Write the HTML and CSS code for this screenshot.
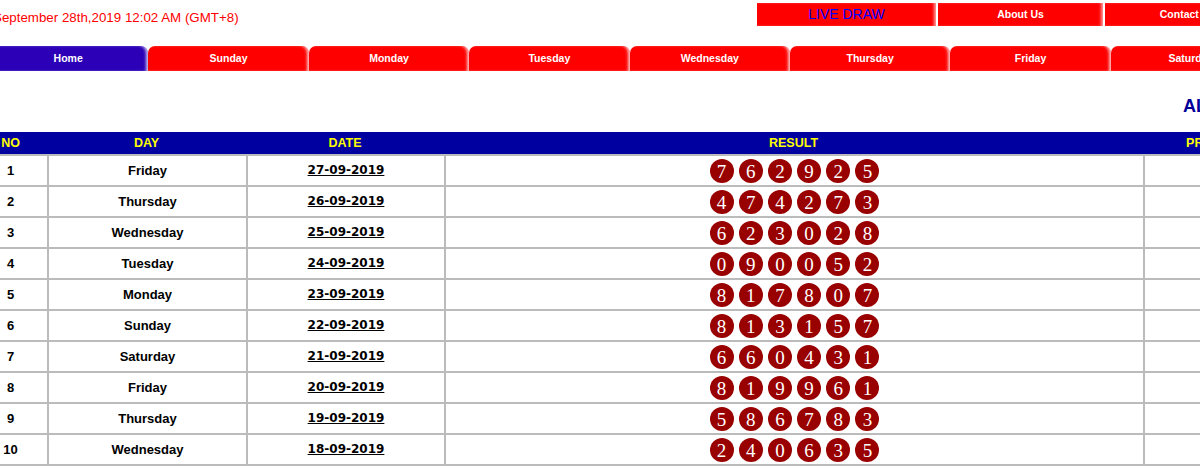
FILE: index.html
```html
<!DOCTYPE html>
<html lang="en">
<head>
<meta charset="utf-8">
<title>Results</title>
<link rel="stylesheet" href="styles.css">
</head>
<body>
<div class="page">
  <header class="topbar">
    <div class="clock">September 28th,2019 12:02 AM (GMT+8)</div>
    <nav class="topnav">
      <a class="topnav__item topnav__item--live" href="#">LIVE DRAW</a>
      <a class="topnav__item topnav__item--small" href="#">About Us</a>
      <a class="topnav__item topnav__item--small" href="#">Contact Us</a>
    </nav>
  </header>

  <nav class="tabs">
    <a class="tab tab--active" href="#">Home</a>
    <a class="tab" href="#">Sunday</a>
    <a class="tab" href="#">Monday</a>
    <a class="tab" href="#">Tuesday</a>
    <a class="tab" href="#">Wednesday</a>
    <a class="tab" href="#">Thursday</a>
    <a class="tab" href="#">Friday</a>
    <a class="tab" href="#">Saturday</a>
  </nav>

  <h1 class="title">ALL RESULT</h1>

  <table class="results">
    <colgroup>
      <col class="col-no">
      <col class="col-day">
      <col class="col-date">
      <col class="col-result">
      <col class="col-prize">
    </colgroup>
    <thead>
      <tr><th>NO</th><th>DAY</th><th>DATE</th><th>RESULT</th><th>PRIZE</th></tr>
    </thead>
    <tbody>
      <tr><td class="no">1</td><td class="day">Friday</td><td class="date"><a href="#">27-09-2019</a></td><td><div class="balls"><span class="ball">7</span><span class="ball">6</span><span class="ball">2</span><span class="ball">9</span><span class="ball">2</span><span class="ball">5</span></div></td><td></td></tr>
      <tr><td class="no">2</td><td class="day">Thursday</td><td class="date"><a href="#">26-09-2019</a></td><td><div class="balls"><span class="ball">4</span><span class="ball">7</span><span class="ball">4</span><span class="ball">2</span><span class="ball">7</span><span class="ball">3</span></div></td><td></td></tr>
      <tr><td class="no">3</td><td class="day">Wednesday</td><td class="date"><a href="#">25-09-2019</a></td><td><div class="balls"><span class="ball">6</span><span class="ball">2</span><span class="ball">3</span><span class="ball">0</span><span class="ball">2</span><span class="ball">8</span></div></td><td></td></tr>
      <tr><td class="no">4</td><td class="day">Tuesday</td><td class="date"><a href="#">24-09-2019</a></td><td><div class="balls"><span class="ball">0</span><span class="ball">9</span><span class="ball">0</span><span class="ball">0</span><span class="ball">5</span><span class="ball">2</span></div></td><td></td></tr>
      <tr><td class="no">5</td><td class="day">Monday</td><td class="date"><a href="#">23-09-2019</a></td><td><div class="balls"><span class="ball">8</span><span class="ball">1</span><span class="ball">7</span><span class="ball">8</span><span class="ball">0</span><span class="ball">7</span></div></td><td></td></tr>
      <tr><td class="no">6</td><td class="day">Sunday</td><td class="date"><a href="#">22-09-2019</a></td><td><div class="balls"><span class="ball">8</span><span class="ball">1</span><span class="ball">3</span><span class="ball">1</span><span class="ball">5</span><span class="ball">7</span></div></td><td></td></tr>
      <tr><td class="no">7</td><td class="day">Saturday</td><td class="date"><a href="#">21-09-2019</a></td><td><div class="balls"><span class="ball">6</span><span class="ball">6</span><span class="ball">0</span><span class="ball">4</span><span class="ball">3</span><span class="ball">1</span></div></td><td></td></tr>
      <tr><td class="no">8</td><td class="day">Friday</td><td class="date"><a href="#">20-09-2019</a></td><td><div class="balls"><span class="ball">8</span><span class="ball">1</span><span class="ball">9</span><span class="ball">9</span><span class="ball">6</span><span class="ball">1</span></div></td><td></td></tr>
      <tr><td class="no">9</td><td class="day">Thursday</td><td class="date"><a href="#">19-09-2019</a></td><td><div class="balls"><span class="ball">5</span><span class="ball">8</span><span class="ball">6</span><span class="ball">7</span><span class="ball">8</span><span class="ball">3</span></div></td><td></td></tr>
      <tr><td class="no">10</td><td class="day">Wednesday</td><td class="date"><a href="#">18-09-2019</a></td><td><div class="balls"><span class="ball">2</span><span class="ball">4</span><span class="ball">0</span><span class="ball">6</span><span class="ball">3</span><span class="ball">5</span></div></td><td></td></tr>
    </tbody>
  </table>
</div>
</body>
</html>
```

FILE: styles.css
```css
html, body {
  margin: 0;
  padding: 0;
  overflow: hidden;
  background: #ffffff;
}

body {
  width: 1200px;
  height: 469px;
  font-family: "Liberation Sans", Arial, sans-serif;
}

.page {
  width: 1282px;
  margin-left: -12px;
}

/* top bar */
.topbar {
  display: flex;
  align-items: flex-start;
  justify-content: space-between;
  height: 46px;
}

.clock {
  margin-top: 10px;
  padding-left: 5px;
  font-size: 13.33px;
  line-height: 16px;
  color: #ff0000;
  white-space: nowrap;
}

.topnav {
  display: flex;
  gap: 2px;
  margin-top: 3px;
}

.topnav__item {
  display: block;
  height: 23px;
  line-height: 23px;
  text-align: center;
  background: #ff0000;
  color: #ffffff;
  font-weight: bold;
  font-size: 10.5px;
  text-decoration: none;
  white-space: nowrap;
  box-shadow: inset -3px 0 3px -1px rgba(255, 255, 255, 0.6);
}

.topnav__item--live {
  width: 179px;
  color: #0000ff;
  font-weight: normal;
  font-size: 14px;
}

.topnav__item--small {
  width: 165px;
}

/* tabs */
.tabs {
  display: flex;
  height: 25px;
}

.tab {
  flex: 0 0 160.4px;
  height: 25px;
  line-height: 25px;
  text-align: center;
  background: #ff0000;
  color: #ffffff;
  font-weight: bold;
  font-size: 10.5px;
  text-decoration: none;
  border-radius: 7px 7px 0 0;
  box-shadow: inset -3px 0 3px -1px rgba(255, 255, 255, 0.75);
}

.tab--active {
  background: #2b00b7;
}

/* title */
.title {
  margin: 24px 0 0 1195px;
  height: 22px;
  font-size: 18px;
  line-height: 22px;
  font-weight: bold;
  color: #000099;
  white-space: nowrap;
}

/* results table */
.results {
  margin: 15px 0 0 -14px;
  width: 1292px;
  table-layout: fixed;
  border-collapse: separate;
  border-spacing: 0;
}

.col-no { width: 73px; }
.col-day { width: 199px; }
.col-date { width: 198px; }
.col-result { width: 699px; }
.col-prize { width: 123px; }

.results th {
  box-sizing: border-box;
  height: 22px;
  padding: 0;
  line-height: 22px;
  background: #0000a0;
  color: #ffff00;
  font-size: 12.5px;
  font-weight: bold;
  text-align: center;
  white-space: nowrap;
}

.results td {
  box-sizing: border-box;
  padding: 0;
  height: 31px;
  line-height: 29px;
  border-top: 2px solid #bbbbbb;
  text-align: center;
  color: #000000;
  font-size: 13px;
  font-weight: bold;
  white-space: nowrap;
}

.results td + td {
  border-left: 2px solid #bbbbbb;
}

.results tbody tr:last-child td {
  border-bottom: 2px solid #bbbbbb;
  height: 33px;
}

.results td.date {
  font-family: "DejaVu Sans", Verdana, sans-serif;
  font-size: 12px;
}

.results td.date a {
  color: #000000;
  text-decoration: underline;
}

.balls {
  display: flex;
  justify-content: center;
  align-items: center;
  gap: 5.2px;
  height: 29px;
}

.ball {
  display: block;
  width: 24px;
  height: 24px;
  border-radius: 50%;
  background: #990000;
  color: #ffffff;
  font-family: "Liberation Serif", "Times New Roman", serif;
  font-weight: normal;
  font-size: 19px;
  line-height: 25px;
  text-align: center;
}
```
